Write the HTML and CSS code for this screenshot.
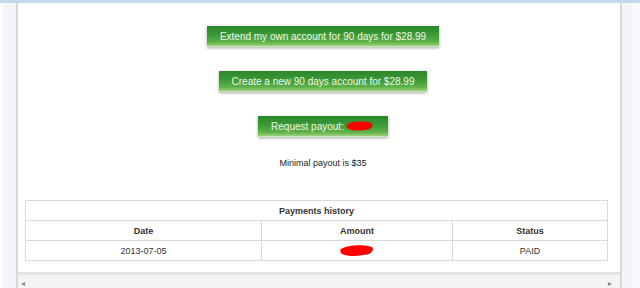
FILE: index.html
```html
<!DOCTYPE html>
<html lang="en">
<head>
    <meta charset="UTF-8">
    <meta name="viewport" content="width=device-width, initial-scale=1.0">
    <title>Account</title>
    <link rel="stylesheet" href="styles.css">
</head>
<body>
    <div class="topbar"></div>
    <div class="layout">
        <div class="side-left"></div>
        <div class="panel">
            <div class="content">
                <div class="actions">
                    <button class="btn">Extend my own account for 90 days for $28.99</button>
                    <button class="btn">Create a new 90 days account for $28.99</button>
                    <button class="btn">Request payout:
                        <svg class="scribble" width="30" height="12" viewBox="0 0 30 12">
                            <path d="M3 4 C8 1 20 1 27 3 C29 6 26 10 20 10 C14 11 6 11 2 8 C1 6 2 5 3 4 Z" fill="#ff0000"/>
                        </svg>
                    </button>
                </div>
                <p class="note">Minimal payout is $35</p>
                <table class="history">
                    <colgroup>
                        <col class="col-date">
                        <col class="col-amount">
                        <col class="col-status">
                    </colgroup>
                    <thead>
                        <tr>
                            <th colspan="3">Payments history</th>
                        </tr>
                        <tr>
                            <th>Date</th>
                            <th>Amount</th>
                            <th>Status</th>
                        </tr>
                    </thead>
                    <tbody>
                        <tr>
                            <td>2013-07-05</td>
                            <td>
                                <svg class="scribble" width="36" height="13" viewBox="0 0 36 13">
                                    <path d="M2 5 C8 1 24 0 33 3 C36 6 32 11 24 11 C16 13 8 12 3 10 C1 8 1 6 2 5 Z" fill="#ff0000"/>
                                </svg>
                            </td>
                            <td>PAID</td>
                        </tr>
                    </tbody>
                </table>
            </div>
            <div class="hscroll">
                <span class="arrow">&#9666;</span>
                <span class="arrow">&#9656;</span>
            </div>
        </div>
        <div class="side-right"></div>
    </div>
</body>
</html>
```

FILE: styles.css
```css
html, body {
    margin: 0;
    height: 288px;
    overflow: hidden;
}
body {
    font-family: "Liberation Sans", Arial, sans-serif;
    background-color: #f3f5f8;
    color: #333;
}
.topbar {
    height: 3px;
    background: #c6d8ec;
}
.layout {
    display: flex;
    height: 285px;
}
.side-left {
    width: 13px;
    border-left: 3px solid #fbfcfd;
}
.panel {
    width: 603px;
    background: white;
    border-left: 2px solid #d8d8d8;
    border-right: 2px solid #d8d8d8;
    display: flex;
    flex-direction: column;
}
.side-right {
    width: 10px;
    border-right: 8px solid #f8f9fb;
}
.content {
    flex: 1;
    padding-top: 23px;
}
.actions {
    display: flex;
    flex-direction: column;
    align-items: center;
    gap: 24px;
    padding-left: 8px;
}
.btn {
    font-family: "Liberation Sans", Arial, sans-serif;
    font-size: 10px;
    height: 21px;
    padding: 0 13px;
    color: #eef7ea;
    border: none;
    border-bottom: 1px solid #c9e8b8;
    background: linear-gradient(to bottom, #2c862b 0%, #3b9a35 45%, #5fb048 80%, #9ad27c 100%);
    box-shadow: 0 1px 3px rgba(0,0,0,0.35);
    display: flex;
    align-items: center;
    cursor: pointer;
}
.btn .scribble {
    margin-left: 1px;
}
.note {
    margin: 20px 0 0;
    padding-left: 8px;
    text-align: center;
    font-size: 9px;
    line-height: 12px;
    color: #222;
}
.history {
    margin: 31px 0 0 7px;
    width: 583px;
    border-collapse: collapse;
    font-size: 9px;
    table-layout: fixed;
}
.history th, .history td {
    border: 1px solid #dadada;
    height: 19px;
    padding: 0;
    text-align: center;
    vertical-align: middle;
}
.history th {
    font-weight: bold;
}
.col-date {
    width: 236px;
}
.col-amount {
    width: 191px;
}
.history td .scribble {
    display: block;
    margin: 0 auto;
}
.hscroll {
    height: 13px;
    border-top: 3px solid #e4e4e4;
    background: #f4f4f4;
    display: flex;
    justify-content: space-between;
    align-items: flex-end;
    padding: 0 8px 0 3px;
    font-size: 8px;
    color: #888;
}
```
